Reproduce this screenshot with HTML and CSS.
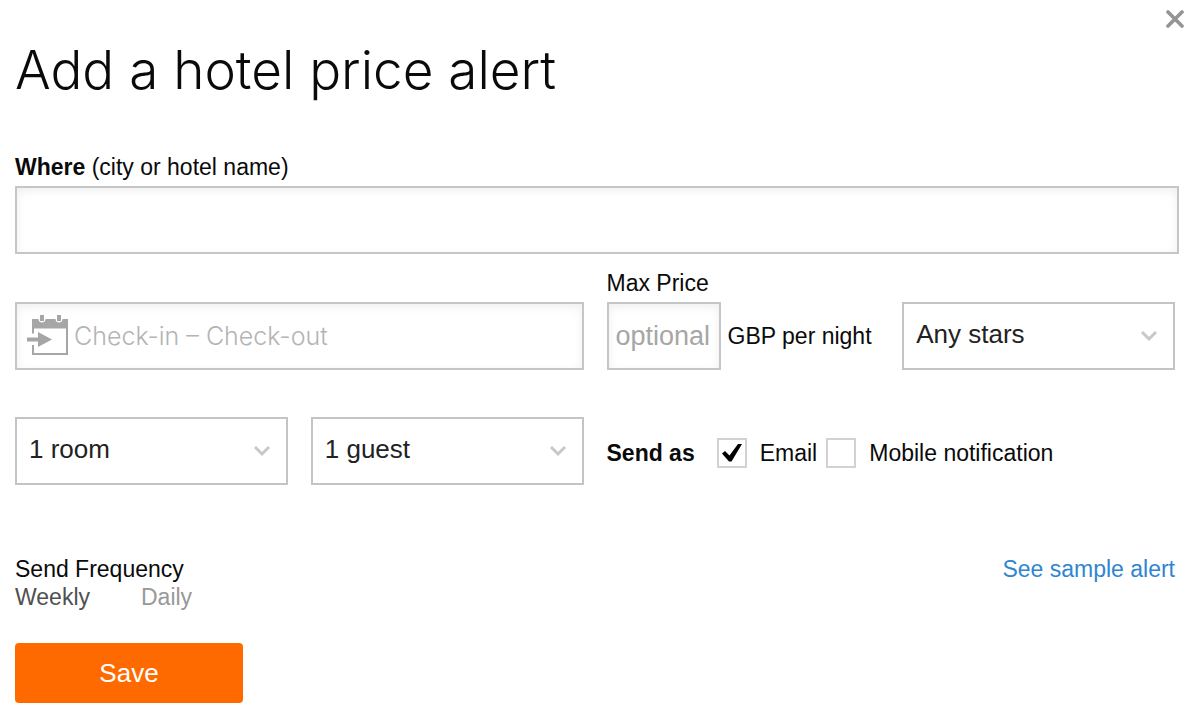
FILE: index.html
```html
<!DOCTYPE html>
<html lang="en">
<head>
<meta charset="utf-8">
<meta name="viewport" content="width=device-width, initial-scale=1">
<title>Add a hotel price alert</title>
<link rel="stylesheet" href="styles.css">
</head>
<body>
<form class="alert-form">
  <header class="header">
    <h1 class="title">Add a hotel price alert</h1>
    <button class="close" type="button" aria-label="Close">
      <svg width="18" height="18" viewBox="0 0 18 18" aria-hidden="true"><path d="M2 2L16 16M16 2L2 16" fill="none" stroke="#949494" stroke-width="3.6" stroke-linecap="round"/></svg>
    </button>
  </header>

  <div class="where">
    <label class="label" for="where"><strong>Where</strong> (city or hotel name)</label>
    <input class="field" id="where" type="text">
  </div>

  <div class="grid">
    <div class="dates">
      <svg class="dates-icon" width="42" height="42" viewBox="0 0 42 42" aria-hidden="true">
        <path d="M5 4H11.500C11.500 8.800 18.500 8.800 18.500 4H28.500C28.500 8.800 35.500 8.800 35.500 4H41V13.500H5Z" fill="#a6a6a6"/>
        <path d="M13 0h4v6h-4zM30 0h4v6h-4z" fill="#a6a6a6"/>
        <path d="M6 12V18.500M6 30V39H40V12" fill="none" stroke="#a6a6a6" stroke-width="2"/>
        <path d="M0 22.500H11V17L25 24.500L11 32V26.500H0Z" fill="#a6a6a6"/>
      </svg>
      <input class="field field-dates" type="text" aria-label="Check-in and check-out dates" placeholder="Check-in – Check-out">
    </div>
    <div class="price">
      <label class="label" for="price">Max Price</label>
      <div class="price-row">
        <input class="field field-price" id="price" type="text" placeholder="optional">
        <span>GBP per night</span>
      </div>
    </div>
    <div class="select">
      <select class="field field-select" aria-label="Stars"><option>Any stars</option></select>
      <svg class="chevron" width="18" height="12" viewBox="0 0 18 12" aria-hidden="true"><path d="M2 2L9 9L16 2" fill="none" stroke="#c8c8c8" stroke-width="3"/></svg>
    </div>

    <div class="select">
      <select class="field field-select" aria-label="Rooms"><option>1 room</option></select>
      <svg class="chevron" width="18" height="12" viewBox="0 0 18 12" aria-hidden="true"><path d="M2 2L9 9L16 2" fill="none" stroke="#c8c8c8" stroke-width="3"/></svg>
    </div>
    <div class="select">
      <select class="field field-select" aria-label="Guests"><option>1 guest</option></select>
      <svg class="chevron" width="18" height="12" viewBox="0 0 18 12" aria-hidden="true"><path d="M2 2L9 9L16 2" fill="none" stroke="#c8c8c8" stroke-width="3"/></svg>
    </div>
    <div class="send-as" role="group" aria-labelledby="send-as">
      <strong class="send-title" id="send-as">Send as</strong>
      <label class="check">
        <input class="check-box" type="checkbox" checked>
        <svg class="check-mark" width="20" height="20" viewBox="0 0 20 20" aria-hidden="true"><path d="M0 10.500L3 8L7.500 12.500L16 1H20L9.500 18.500H7Z" fill="#000"/></svg>
        <span>Email</span>
      </label>
      <label class="check">
        <input class="check-box" type="checkbox">
        <svg class="check-mark" width="20" height="20" viewBox="0 0 20 20" aria-hidden="true"><path d="M0 10.500L3 8L7.500 12.500L16 1H20L9.500 18.500H7Z" fill="#000"/></svg>
        <span>Mobile notification</span>
      </label>
    </div>
  </div>

  <div class="options">
    <div role="radiogroup" aria-labelledby="frequency">
      <div class="option-title" id="frequency">Send Frequency</div>
      <div class="frequency">
        <label class="choice"><input class="choice-input" type="radio" name="frequency" checked><span>Weekly</span></label>
        <label class="choice"><input class="choice-input" type="radio" name="frequency"><span>Daily</span></label>
      </div>
    </div>
    <a class="sample" href="#sample">See sample alert</a>
  </div>

  <button class="save" type="button">Save</button>
</form>
</body>
</html>
```
FILE: styles.css
```css
* { box-sizing: border-box; }

body {
  margin: 0;
  background: #fff;
  color: #0a0a0a;
  font: 23px/28px "Liberation Sans", Arial, sans-serif;
}

.alert-form { padding: 8px 21px 20px 15px; }

.header {
  display: flex;
  justify-content: space-between;
  align-items: flex-start;
}

.title {
  margin: 28px 0 0;
  font: 300 53px/68px Inter, "Liberation Sans", sans-serif;
}

.close {
  display: flex;
  margin: 0 -7px 0 0;
  padding: 2px;
  border: 0;
  background: none;
  cursor: pointer;
}

.where { margin-top: 49px; }

.label { display: block; margin-bottom: 5px; }

.field {
  display: block;
  width: 100%;
  height: 68px;
  margin: 0;
  padding: 0 12px;
  border: 2px solid #c6c6c6;
  border-radius: 0;
  background: #fff;
  box-shadow: inset 0 3px 10px #efefef;
  color: #222;
  font: 26px/30px "Liberation Sans", Arial, sans-serif;
}

.field::placeholder { color: #a6a6a6; opacity: 1; }

.grid {
  display: grid;
  grid-template-columns: repeat(4, 1fr);
  column-gap: 23px;
  row-gap: 47px;
  align-items: end;
  margin: 15px 4px 0 0;
}

.dates { grid-column: span 2; display: grid; align-items: center; }
.dates > * { grid-area: 1 / 1; }
.dates-icon { z-index: 1; margin-left: 12px; }
.field-dates { padding-left: 57px; font-family: Inter, "Liberation Sans", sans-serif; font-size: 25px; font-weight: 300; }
.field-dates::placeholder { color: #b4b4b4; }

.price-row { display: flex; align-items: center; gap: 7px; white-space: nowrap; }
.field-price { width: 114px; padding: 0 7px; font-size: 27px; }

.select { display: grid; align-items: center; }
.select > * { grid-area: 1 / 1; }
.field-select { appearance: none; padding: 0 12px 4px; border-color: #c4c4c4; box-shadow: none; }
.chevron { justify-self: end; margin-right: 17px; pointer-events: none; }

.send-as {
  grid-column: span 2;
  display: flex;
  align-items: center;
  gap: 9px;
  height: 68px;
  padding-top: 3px;
  white-space: nowrap;
}
.send-title { margin-right: 13px; }
.check { display: grid; grid-template-columns: 30px auto; column-gap: 13px; align-items: center; }
.check-box {
  grid-area: 1 / 1;
  appearance: none;
  width: 30px;
  height: 30px;
  margin: 0;
  border: 2px solid #d2d2d2;
  background: #fff;
}
.check-mark { grid-area: 1 / 1; justify-self: center; visibility: hidden; pointer-events: none; }
.check-box:checked + .check-mark { visibility: visible; }

.options {
  display: flex;
  justify-content: space-between;
  align-items: flex-start;
  margin: 70px 4px 0 0;
}
.frequency { display: flex; gap: 51px; }
.choice { position: relative; color: #999; cursor: pointer; }
.choice:has(:checked) { color: #505050; }
.choice-input { position: absolute; opacity: 0; margin: 0; }
.sample { color: #2f86cf; text-decoration: none; }

.save {
  display: block;
  width: 228px;
  height: 60px;
  margin-top: 32px;
  padding: 0;
  border: 0;
  border-radius: 4px;
  background: #ff6a00;
  color: #fff;
  font: 26px/30px "Liberation Sans", Arial, sans-serif;
  cursor: pointer;
}
```
